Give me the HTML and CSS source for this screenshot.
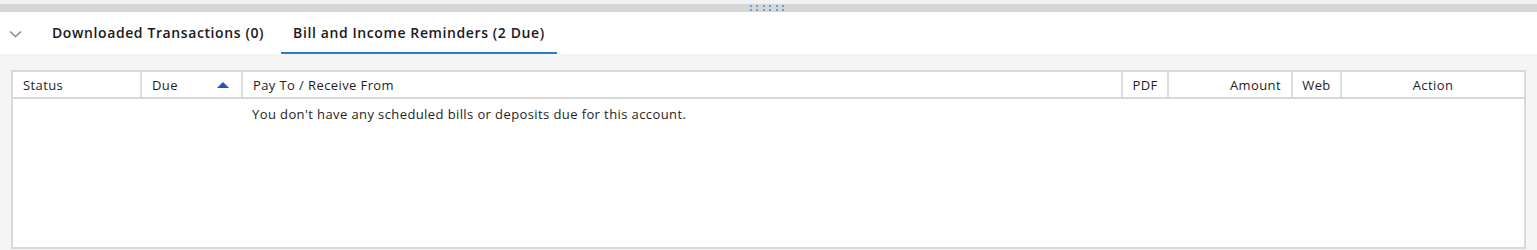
FILE: index.html
```html
<!DOCTYPE html>
<html lang="en">
<head>
    <meta charset="UTF-8">
    <meta name="viewport" content="width=device-width, initial-scale=1.0">
    <title>Bill and Income Reminders</title>
    <link rel="stylesheet" href="styles.css">
</head>
<body>
    <div class="top-edge"></div>
    <div class="splitter">
        <div class="grip">
            <span></span><span></span><span></span><span></span><span></span><span></span>
            <span></span><span></span><span></span><span></span><span></span><span></span>
        </div>
    </div>

    <div class="tabbar">
        <button class="collapse" aria-label="Collapse">
            <svg width="13" height="8" viewBox="0 0 13 8"><path d="M1 1.5 L6.5 6.5 L12 1.5" fill="none" stroke="#8a8a8a" stroke-width="1.6"/></svg>
        </button>
        <div class="tab">Downloaded Transactions (0)</div>
        <div class="tab active">Bill and Income Reminders (2 Due)</div>
    </div>

    <div class="panel">
        <div class="grid">
            <table>
                <colgroup>
                    <col class="c-status">
                    <col class="c-due">
                    <col class="c-payto">
                    <col class="c-pdf">
                    <col class="c-amount">
                    <col class="c-web">
                    <col class="c-action">
                </colgroup>
                <thead>
                    <tr>
                        <th>Status</th>
                        <th class="sorted">Due <span class="sort-up"></span></th>
                        <th>Pay To / Receive From</th>
                        <th class="center">PDF</th>
                        <th class="right">Amount</th>
                        <th class="center">Web</th>
                        <th class="center">Action</th>
                    </tr>
                </thead>
                <tbody>
                    <tr>
                        <td></td>
                        <td></td>
                        <td colspan="5" class="empty">You don't have any scheduled bills or deposits due for this account.</td>
                    </tr>
                </tbody>
            </table>
        </div>
    </div>
</body>
</html>
```

FILE: styles.css
```css
body {
    margin: 0;
    font-family: "Open Sans", "Noto Sans", Arial, sans-serif;
    font-size: 13px;
    letter-spacing: 0.4px;
    color: #1e1e1e;
    background-color: #f5f5f5;
}
.top-edge {
    height: 4px;
    background-color: #f2f2f2;
}
.splitter {
    height: 8px;
    background-color: #d6d6d6;
    display: flex;
    justify-content: center;
    align-items: center;
}
.grip {
    display: grid;
    grid-template-columns: repeat(6, 2px);
    column-gap: 4.5px;
    row-gap: 2px;
    margin-left: -3px;
}
.grip span {
    width: 2px;
    height: 2px;
    background-color: #6b9fd1;
}
.tabbar {
    height: 42px;
    background-color: white;
    display: flex;
    align-items: stretch;
}
.collapse {
    background: none;
    border: none;
    padding: 0;
    width: 40px;
    padding-left: 9px;
    padding-top: 2px;
    display: flex;
    align-items: center;
    cursor: pointer;
}
.tab {
    display: flex;
    align-items: center;
    padding: 0 12px;
    margin-right: 5px;
    font-size: 14px;
    font-weight: 600;
    letter-spacing: 0.6px;
    color: #1a1a1a;
    border-bottom: 2px solid transparent;
    padding-top: 1px;
}
.tab.active {
    border-bottom-color: #2f7cc4;
}
.panel {
    padding: 16px 11px 1px 11px;
}
.grid {
    height: 179px;
    box-sizing: border-box;
    border: 2px solid #d8d8d8;
    background-color: white;
}
table {
    width: 100%;
    border-collapse: collapse;
    table-layout: fixed;
}
.c-status { width: 128px; }
.c-due { width: 101px; }
.c-payto { width: 880px; }
.c-pdf { width: 46px; }
.c-amount { width: 124px; }
.c-web { width: 49px; }
th {
    height: 25px;
    padding: 0 10px;
    font-weight: normal;
    text-align: left;
    border-left: 2px solid #dcdcdc;
    border-bottom: 2px solid #d8d8d8;
    white-space: nowrap;
}
th:first-child {
    border-left: none;
}
th.center {
    text-align: center;
    padding: 0;
}
th.right {
    text-align: right;
}
.sorted {
    position: relative;
}
.sort-up {
    position: absolute;
    right: 12px;
    top: 10px;
    width: 0;
    height: 0;
    border-left: 6px solid transparent;
    border-right: 6px solid transparent;
    border-bottom: 6px solid #1b55c2;
}
td {
    padding: 0 10px;
    height: 30px;
    vertical-align: middle;
}
td.empty {
    padding-top: 0;
    padding-bottom: 2px;
}
```
